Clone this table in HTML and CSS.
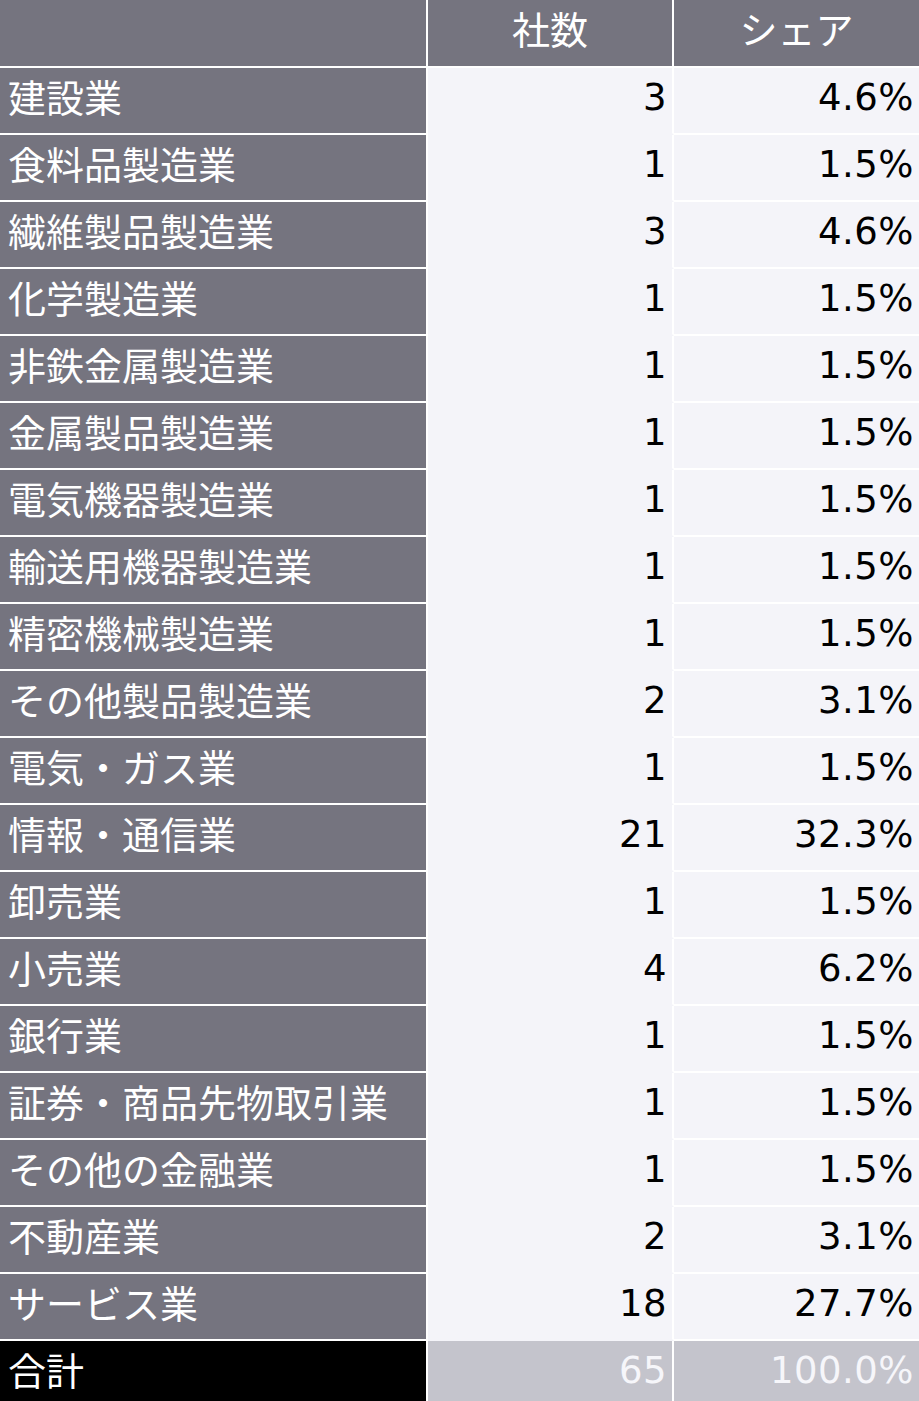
FILE: index.html
```html
<!DOCTYPE html>
<html lang="ja">
<head>
<meta charset="utf-8">
<link rel="stylesheet" href="styles.css">
</head>
<body>
<table class="tbl">
  <thead>
    <tr><th class="lab"></th><th class="hc">社数</th><th class="hc h3">シェア</th></tr>
  </thead>
  <tbody>
    <tr><th class="lab">建設業</th><td class="n">3</td><td class="p">4.6%</td></tr>
    <tr><th class="lab">食料品製造業</th><td class="n">1</td><td class="p">1.5%</td></tr>
    <tr><th class="lab">繊維製品製造業</th><td class="n">3</td><td class="p">4.6%</td></tr>
    <tr><th class="lab">化学製造業</th><td class="n">1</td><td class="p">1.5%</td></tr>
    <tr><th class="lab">非鉄金属製造業</th><td class="n">1</td><td class="p">1.5%</td></tr>
    <tr><th class="lab">金属製品製造業</th><td class="n">1</td><td class="p">1.5%</td></tr>
    <tr><th class="lab">電気機器製造業</th><td class="n">1</td><td class="p">1.5%</td></tr>
    <tr><th class="lab">輸送用機器製造業</th><td class="n">1</td><td class="p">1.5%</td></tr>
    <tr><th class="lab">精密機械製造業</th><td class="n">1</td><td class="p">1.5%</td></tr>
    <tr><th class="lab">その他製品製造業</th><td class="n">2</td><td class="p">3.1%</td></tr>
    <tr><th class="lab">電気・ガス業</th><td class="n">1</td><td class="p">1.5%</td></tr>
    <tr><th class="lab">情報・通信業</th><td class="n">21</td><td class="p">32.3%</td></tr>
    <tr><th class="lab">卸売業</th><td class="n">1</td><td class="p">1.5%</td></tr>
    <tr><th class="lab">小売業</th><td class="n">4</td><td class="p">6.2%</td></tr>
    <tr><th class="lab">銀行業</th><td class="n">1</td><td class="p">1.5%</td></tr>
    <tr><th class="lab">証券・商品先物取引業</th><td class="n">1</td><td class="p">1.5%</td></tr>
    <tr><th class="lab">その他の金融業</th><td class="n">1</td><td class="p">1.5%</td></tr>
    <tr><th class="lab">不動産業</th><td class="n">2</td><td class="p">3.1%</td></tr>
    <tr><th class="lab">サービス業</th><td class="n">18</td><td class="p">27.7%</td></tr>
    <tr class="total"><th class="lab">合計</th><td class="n">65</td><td class="p">100.0%</td></tr>
  </tbody>
</table>
</body>
</html>
```
FILE: styles.css
```css
html, body {
  margin: 0;
  padding: 0;
  background: #ffffff;
}
.tbl {
  width: 919px;
  border-collapse: separate;
  border-spacing: 0;
  table-layout: fixed;
  font-family: "Noto Sans CJK JP", "DejaVu Sans", sans-serif;
  font-size: 38px;
  font-weight: 400;
}
.tbl th, .tbl td {
  padding: 0;
  box-sizing: content-box;
  border-bottom: 2px solid #ffffff;
  white-space: nowrap;
  overflow: hidden;
  vertical-align: middle;
  line-height: 40px;
}
.tbl thead th {
  background: #75747f;
  color: #ffffff;
  font-weight: 400;
  text-align: center;
  padding-bottom: 10px;
  height: 56px;
}
.tbl th.lab {
  width: 418px;
  padding-left: 8px;
  border-right: 2px solid #ffffff;
  background: #75747f;
  color: #ffffff;
  font-weight: 400;
  text-align: left;
  padding-bottom: 10px;
  height: 55px;
}
.tbl thead th.lab {
  height: 56px;
}
.tbl .hc {
  width: 244px;
  border-right: 2px solid #ffffff;
}
.tbl .h3 {
  border-right: none;
  width: 245px;
}
.tbl td {
  background: #f4f4f9;
  color: #000000;
  text-align: right;
  font-family: "DejaVu Sans", "Noto Sans CJK JP", sans-serif;
  font-size: 37px;
  letter-spacing: 0.5px;
  padding-bottom: 5px;
  height: 60px;
}
.tbl td.n {
  border-right: 2px solid #ffffff;
  border-bottom-color: #f4f4f9;
  padding-right: 5px;
  width: 239px;
}
.tbl td.p {
  padding-right: 5px;
  width: 240px;
}
.tbl .total th.lab {
  background: #000000;
  border-bottom: none;
}
.tbl .total td {
  background: #c4c4cc;
  color: #f6f6fa;
  border-bottom: none;
}
.tbl .total td.n {
  border-bottom: none;
}
```
